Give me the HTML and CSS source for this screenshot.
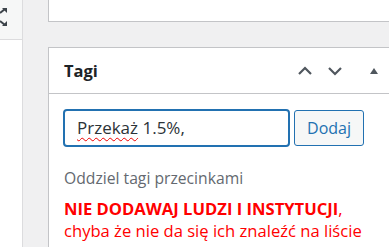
FILE: index.html
```html
<!DOCTYPE html>
<html lang="pl">
<head>
<meta charset="utf-8">
<link rel="stylesheet" href="styles.css">
</head>
<body>
<div class="layout">
  <aside class="side">
    <div class="side-top">
      <svg class="expand" width="9" height="18" viewBox="0 0 9 18">
        <path d="M0 5 L5 1" stroke="#3c434a" stroke-width="2" fill="none"/>
        <path d="M2 0 H7 V5 Z" fill="#3c434a"/>
        <path d="M0 13 L5 17" stroke="#3c434a" stroke-width="2" fill="none"/>
        <path d="M2 18 H7 V13 Z" fill="#3c434a"/>
      </svg>
    </div>
  </aside>
  <main class="main">
    <div class="box box-top"></div>
    <section class="box box-tags">
      <header class="box-head">
        <h2 class="box-title">Tagi</h2>
        <div class="box-actions">
          <svg class="act" width="16" height="10" viewBox="0 0 16 10"><path d="M2 8 L8 2 L14 8" stroke="#50575e" stroke-width="2.2" fill="none"/></svg>
          <svg class="act" width="16" height="10" viewBox="0 0 16 10"><path d="M2 2 L8 8 L14 2" stroke="#50575e" stroke-width="2.2" fill="none"/></svg>
          <svg class="act toggle" width="10" height="8" viewBox="0 0 10 8"><path d="M1 7 L5 1 L9 7 Z" fill="#50575e"/></svg>
        </div>
      </header>
      <div class="box-body">
        <div class="tag-row">
          <div class="tag-input"><span class="typo">Przekaż</span> 1.5%,</div>
          <button class="btn">Dodaj</button>
        </div>
        <p class="hint">Oddziel tagi przecinkami</p>
        <p class="warn"><strong>NIE DODAWAJ LUDZI I INSTYTUCJI</strong>, chyba że nie da się ich znaleźć na liście kołek kołek wybierz z najczęściej</p>
      </div>
    </section>
  </main>
</div>
</body>
</html>
```
FILE: styles.css
```css
html, body {
  margin: 0;
  padding: 0;
  height: 247px;
  overflow: hidden;
  background: #f0f0f1;
  font-family: "Open Sans", "Noto Sans", sans-serif;
}
.layout {
  display: flex;
  height: 247px;
}
.side {
  width: 22px;
  flex: none;
  background: #fff;
  border-right: 1px solid #dcdcde;
}
.side-top {
  height: 39px;
  background: #f6f7f7;
  border-bottom: 1px solid #dcdcde;
  display: flex;
  align-items: flex-start;
}
.expand {
  margin-top: 8px;
}
.main {
  flex: 1;
  padding-left: 25px;
  min-width: 0;
  overflow: hidden;
}
.box {
  background: #fff;
  border: 1px solid #c3c4c7;
  width: 360px;
}
.box-top {
  height: 21px;
  border-top: none;
}
.box-tags {
  margin-top: 25px;
  height: 400px;
}
.box-head {
  height: 45px;
  border-bottom: 1px solid #c3c4c7;
  display: flex;
  align-items: center;
  padding-left: 15px;
}
.box-title {
  margin: 0;
  font-size: 16.5px;
  font-weight: 700;
  color: #1d2327;
  width: 233px;
  flex: none;
}
.box-actions {
  display: flex;
  align-items: center;
}
.act {
  display: block;
}
.act + .act { margin-left: 14px; }
.act.toggle { margin-left: 26px; }
.box-body {
  padding: 15px 14px 0 14px;
}
.tag-row {
  display: flex;
  align-items: center;
  gap: 4px;
}
.tag-input {
  box-sizing: border-box;
  width: 227px;
  height: 38px;
  border: 2px solid #2271b1;
  border-radius: 4px;
  padding: 0 12px;
  font-size: 17px;
  line-height: 34px;
  color: #2c3338;
}
.typo {
  text-decoration: underline wavy #e00;
  text-decoration-thickness: 1px;
  text-underline-offset: 3px;
}
.btn {
  box-sizing: border-box;
  width: 70px;
  height: 36px;
  background: #f6f7f7;
  border: 1px solid #2271b1;
  border-radius: 3px;
  color: #2271b1;
  font-family: inherit;
  font-size: 16px;
  padding: 0;
}
.hint {
  margin: 20px 0 0 1px;
  font-size: 15.7px;
  color: #646970;
  line-height: 22px;
}
.warn {
  margin: 9px 0 0 1px;
  width: 300px;
  font-size: 16.6px;
  line-height: 22px;
  color: #f00;
}
.warn strong {
  font-weight: 700;
}
```
